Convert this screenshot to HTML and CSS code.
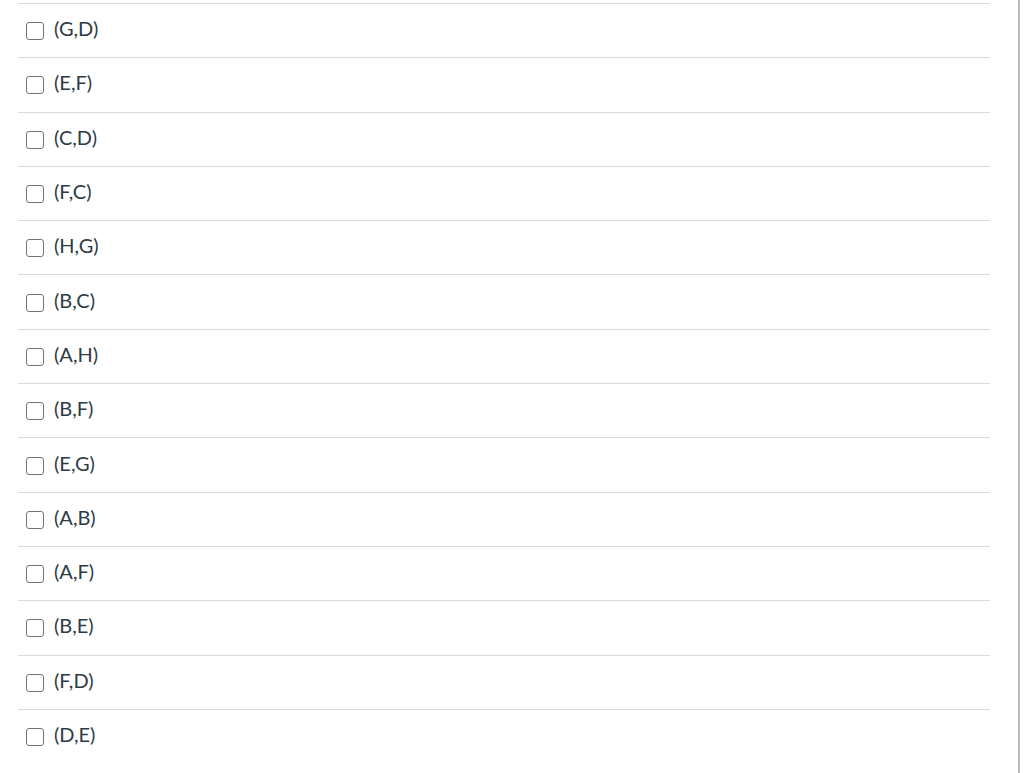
FILE: index.html
```html
<!DOCTYPE html>
<html>
<head>
<meta charset="utf-8">
<link rel="stylesheet" href="styles.css">
</head>
<body>
<div class="page">
  <div class="list">
    <label class="row"><span class="box"></span><span class="txt">(G,D)</span></label>
    <label class="row"><span class="box"></span><span class="txt">(E,F)</span></label>
    <label class="row"><span class="box"></span><span class="txt">(C,D)</span></label>
    <label class="row"><span class="box"></span><span class="txt">(F,C)</span></label>
    <label class="row"><span class="box"></span><span class="txt">(H,G)</span></label>
    <label class="row"><span class="box"></span><span class="txt">(B,C)</span></label>
    <label class="row"><span class="box"></span><span class="txt">(A,H)</span></label>
    <label class="row"><span class="box"></span><span class="txt">(B,F)</span></label>
    <label class="row"><span class="box"></span><span class="txt">(E,G)</span></label>
    <label class="row"><span class="box"></span><span class="txt">(A,B)</span></label>
    <label class="row"><span class="box"></span><span class="txt">(A,F)</span></label>
    <label class="row"><span class="box"></span><span class="txt">(B,E)</span></label>
    <label class="row"><span class="box"></span><span class="txt">(F,D)</span></label>
    <label class="row"><span class="box"></span><span class="txt">(D,E)</span></label>
  </div>
  <div class="rule"></div>
</div>
</body>
</html>
```

FILE: styles.css
```css
html, body {
  margin: 0;
  padding: 0;
  background: #ffffff;
}
body {
  font-family: Lato, "Open Sans", sans-serif;
  color: #2d3b45;
  overflow: hidden;
  height: 773px;
}
.page {
  display: flex;
  height: 773px;
}
.list {
  width: 972px;
  margin-left: 18px;
  padding-top: 3px;
  display: flex;
  flex-direction: column;
}
.row {
  display: flex;
  align-items: center;
  height: 54.3px;
  box-sizing: border-box;
  border-top: 1px solid #d9dcdf;
  padding-left: 8px;
  flex-shrink: 0;
}
.box {
  width: 18px;
  height: 18px;
  border: 1.3px solid #6b7780;
  border-radius: 3px;
  box-sizing: border-box;
  margin-top: 1px;
  flex-shrink: 0;
}
.txt {
  margin-left: 10px;
  font-size: 20px;
  line-height: 24px;
  margin-bottom: 5px;
}
.rule {
  width: 2px;
  height: 773px;
  background: #bdbdbd;
  margin-left: 28px;
}
```
